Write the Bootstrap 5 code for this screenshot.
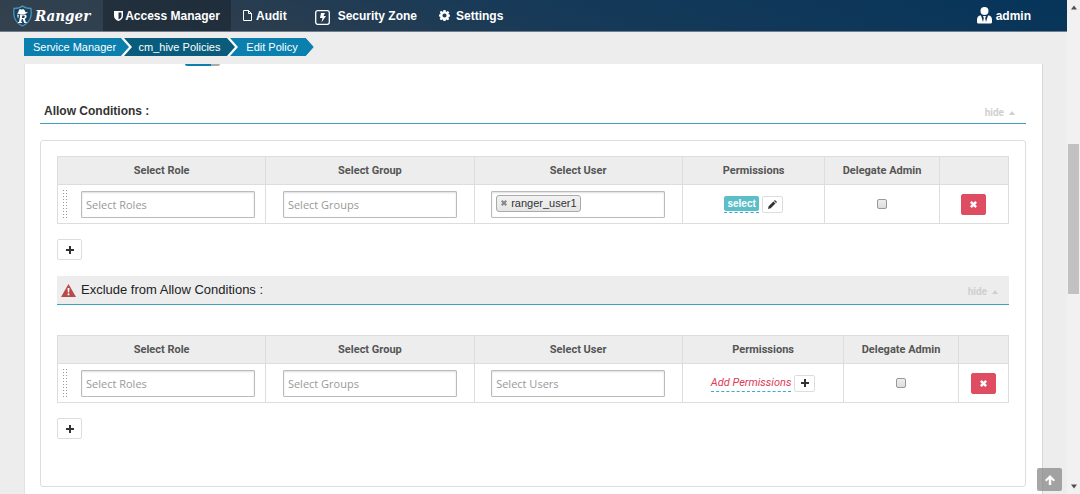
<!DOCTYPE html>
<html lang="en">
<head>
<meta charset="utf-8">
<meta name="viewport" content="width=device-width, initial-scale=1">
<title>Ranger - Edit Policy</title>
<link href="https://cdn.jsdelivr.net/npm/bootstrap@5.3.0/dist/css/bootstrap.min.css" rel="stylesheet">
<style>
  body { font-family: "Liberation Sans", Arial, sans-serif; font-size: 12px; line-height: 16px; background: #ededed; color: #333; }
  a { text-decoration: none; }
  svg { display: block; fill: currentColor; flex: none; }
  .topbar { height: 32px; background: linear-gradient(20deg, #35424e 0%, #2a3d4f 25%, #173a58 50%, #06345a 100%); border-bottom: 1px solid #6d7f8f; font-weight: bold; }
  .topbar a { color: #fff; }
  .brand { width: 103px; padding-left: 12px; gap: 2px; font: italic bold 15px/20px "DejaVu Serif Condensed", "DejaVu Serif", serif; }
  .tab { height: 31px; }
  .tab-current { width: 128px; gap: 2px; background: rgba(20, 28, 38, .45); }
  .tab-audit { margin-left: 12px; }
  .tab-zone { margin-left: 28px; }
  .tab-settings { margin-left: 22px; gap: 6px; }
  .account { padding-right: 36px; }
  .crumbs { padding: 6px 24px 8px; height: 32px; }
  .crumb-trail { background: #fff; border-radius: 2px 0 0 2px; clip-path: polygon(0 0, calc(100% - 8px) 0, 100% 50%, calc(100% - 8px) 100%, 0 100%); }
  .crumb { height: 18px; font: 11px/18px "Liberation Sans", Arial, sans-serif; color: #fff; background: #0b7fad; clip-path: polygon(0 0, calc(100% - 8px) 0, 100% 50%, calc(100% - 8px) 100%, 0 100%, 8px 50%); margin-left: -5px; text-align: center; }
  .crumb-first { width: 105px; margin-left: 0; clip-path: polygon(0 0, calc(100% - 8px) 0, 100% 50%, calc(100% - 8px) 100%, 0 100%); padding-right: 4px; }
  .crumb-mid { width: 111px; background: #0a5c7c; }
  .crumb-last { width: 84px; }
  .sheet { margin: 0 24px; padding: 0 16px 0 15px; background: #fff; border-left: 1px solid #e2e2e2; border-right: 1px solid #d8d8d8; }
  .switch-edge { width: 35px; height: 2px; margin-left: 145px; border-radius: 0 0 12px 12px; background: linear-gradient(90deg, #0b7fad 75%, #aaa 75%); }
  .section-line { border-bottom: 1px solid #3f9fc4; }
  .allow-head { height: 26px; margin-top: 32px; padding: 0 10px 0 4px; }
  .allow-head h2 { font-size: 12px; line-height: 26px; font-weight: bold; }
  .exclude-head { height: 29px; margin: 16px 0 30px; padding: 0 10px 0 4px; background: #ededed; }
  .exclude-head h3 { gap: 5px; font: 13px/26px "Liberation Sans", Arial, sans-serif; color: #222; }
  .hide-link { font: bold 10px/16px Roboto, sans-serif; color: #cfcfcf; gap: 4px; padding-top: 4px; }
  .box { margin-top: 16px; padding: 15px 16px 47px; border: 1px solid #ddd; border-radius: 3px; }
  .conditions { width: 100%; table-layout: fixed; border-collapse: collapse; }
  .conditions th, .conditions td { border: 1px solid #ddd; padding: 0; text-align: center; vertical-align: middle; }
  .conditions th { height: 28px; background: #ededed; font: bold 11px/16px Roboto, sans-serif; color: #555; }
  .conditions td { height: 39px; }
  .w-pick { width: 21.9%; } .w-perm { width: 15%; } .w-perm-wide { width: 17%; } .w-admin { width: 12%; }
  .role-cell { gap: 13px; }
  .grip { width: 6px; height: 31px; background: radial-gradient(circle, #999 1px, transparent 1px) 0 0 / 3px 3px; }
  .picker { width: 174px; height: 27px; border: 1px solid #bbb; border-radius: 1px; box-shadow: inset 0 1px 2px #ddd; padding: 0 4px; background: #fff; font: 11px/16px "Open Sans", sans-serif; color: #555; }
  .picker input { width: 60px; min-width: 0; border: 0; padding: 0; background: transparent; outline: 0; }
  .picker::placeholder { color: #999; opacity: 1; }
  .chip { height: 17px; margin-top: 3px; padding: 0 3px 0 4px; gap: 4px; border: 1px solid #aaa; border-radius: 3px; background: linear-gradient(#f2f2f2, #e5e5e5); font: 11px/14px "Liberation Sans", Arial, sans-serif; color: #333; }
  .chip button { border: 0; padding: 0; background: none; color: #888; }
  .perm-cell { gap: 3px; }
  .perm { height: 17px; border-bottom: 1px dashed #3aa7d5; }
  .perm-tag { padding: 0 3px; border-radius: 2px; background: #5bbec8; color: #fff; font: bold 10px/15px "Liberation Sans", sans-serif; }
  .perm-empty { color: #dc3a58; font: italic 11px/16px Roboto, sans-serif; }
  .tool { display: flex; align-items: center; justify-content: center; width: 25px; height: 21px; padding: 0; border: 1px solid #ddd; border-radius: 2px; background: #fff; color: #333; }
  .tool-add { margin-top: 15px; }
  .tool-small { width: 21px; height: 17px; }
  .tool-delete { background: #de4d62; border-color: #de4d62; color: #fff; }
  .check { appearance: none; display: block; width: 10px; height: 10px; margin: 0 auto; border: 1px solid #999; border-radius: 2px; background: linear-gradient(#eee, #ddd); }
  .to-top { right: 5px; bottom: 3px; width: 25px; height: 23px; border: 0; border-radius: 2px; background: rgba(130, 130, 130, .7); color: #fff; }
  .scroll-rail { flex: none; width: 13px; padding: 5px 0; background: #f1f1f1; color: #505050; }
  .scroll-thumb { flex: none; width: 11px; height: 150px; margin-top: 134px; background: #c1c1c1; }
</style>
<script src="https://cdn.jsdelivr.net/npm/bootstrap@5.3.0/dist/js/bootstrap.bundle.min.js"></script>
</head>
<body>
<svg width="0" height="0" class="position-absolute" aria-hidden="true">
  <symbol id="plus" viewBox="0 0 8 8"><path d="M3 0h2v3h3v2H5v3H3V5H0V3h3z"/></symbol>
  <symbol id="cross" viewBox="0 0 8 8"><path d="M2 0 4 2 6 0 8 2 6 4 8 6 6 8 4 6 2 8 0 6 2 4 0 2z"/></symbol>
  <symbol id="caret" viewBox="0 0 8 4"><path d="M1 4 4 0l3 4z"/></symbol>
</svg>
<div class="d-flex vh-100 overflow-hidden">
  <div class="flex-grow-1 position-relative overflow-hidden">
    <header class="topbar d-flex align-items-center">
      <a href="#" class="brand d-flex align-items-center">
        <svg width="21" height="22" viewBox="0 0 21 22"><path d="M10.500 1C13 3 16 3.500 19 3.500c1 8.500-1 13.500-8.500 17.500C3 17 1 12 2 3.500c3 0 6-.5 8.500-2.500z" fill="#17415f" stroke="#4f93b3" stroke-width="1.300"/><path d="M4.500 8c1.500 0 2-.6 2.300-2.500.3-1.400 1.500-1.600 2.900-.8 1.400-.8 3-.3 3.200 1.300.2 1.200 1.500 1.500 3 1.200-2 2.300-8 2.800-11.400.8z" fill="#fff"/><path fill-rule="evenodd" d="M8 9.500h4.500c2.800 0 2.800 3.600.3 4.300l1 3.200h1l-.3 1h-2.300l-1.500-4h-.9l-.6 3h1l-.2 1H6l.2-1h.8l1.200-6.500H7.800zm2.300 1-.4 2.500h1.600c1.500 0 1.800-2.500.2-2.500z" fill="#fff"/><path d="M5 9.500 7 10l-1 4z" fill="#dce8ee"/></svg>
        Ranger</a>
      <nav class="d-flex align-items-center flex-grow-1" aria-label="Main">
        <a href="#" class="tab tab-current d-flex align-items-center justify-content-center">
          <svg width="9" height="10" viewBox="0 0 9 10"><path fill-rule="evenodd" d="M0 0h9v5c0 2.500-2 4-4.500 5C2 9 0 7.500 0 5zm4.500 1.500v7C6.500 7.500 7.500 6.500 7.500 5V1.500z"/></svg>Access Manager</a>
        <a href="#" class="tab tab-audit d-flex align-items-center gap-1">
          <svg width="9" height="11" viewBox="0 0 9 11"><path fill="none" stroke="#fff" d="M.5.500h5l3 3v7h-8zM5.500.500v3h3"/></svg>Audit</a>
        <a href="#" class="tab tab-zone d-flex align-items-center gap-2">
          <svg width="15" height="15" viewBox="0 0 15 15" class="mt-1"><rect x=".7" y=".7" width="13.600" height="13.600" rx="2" fill="none" stroke="#fff" stroke-width="1.300"/><path d="M6 3h4L8.500 6H11l-4.500 6.500L7.500 8H5z"/></svg>Security Zone</a>
        <a href="#" class="tab tab-settings d-flex align-items-center">
          <svg width="11" height="11" viewBox="0 0 16 16"><path fill-rule="evenodd" d="M6.500 0h3l.4 2 1.300.6L12.900 1.400 15 3.500l-1.200 1.700.6 1.300 1.600.3v2.800l-1.700.4-.6 1.300 1.200 1.700-2 2-1.700-1.200-1.400.6-.4 1.900h-3l-.4-2-1.300-.6L3 14.900.9 12.800l1.200-1.700-.5-1.300L0 9.400V6.600l1.700-.4.6-1.300L1.100 3.200l2-2 1.700 1.200L6.100 2zM8 5a3 3 0 1 0 0 6 3 3 0 0 0 0-6z"/></svg>Settings</a>
      </nav>
      <a href="#" class="account d-flex align-items-center gap-1">
        <svg width="15" height="17" viewBox="0 0 15 17"><circle cx="7.500" cy="4" r="4"/><path fill-rule="evenodd" d="M3 8.500h1L6 15l.8-4L6 9h3l-.8 2 .8 4 2-6.500h1c2 .5 3 2 3 4.500v2c0 1-.7 1.500-2 1.500H2C.7 16.500 0 16 0 15v-2c0-2.500 1-4 3-4.500z"/></svg>
        <span>admin</span></a>
    </header>
    <nav class="crumbs d-flex" aria-label="Breadcrumb">
      <div class="crumb-trail d-flex">
        <a href="#" class="crumb crumb-first">Service Manager</a>
        <a href="#" class="crumb crumb-mid">cm_hive Policies</a>
        <a href="#" class="crumb crumb-last">Edit Policy</a>
      </div>
    </nav>
    <main class="sheet">
      <div class="switch-edge"></div>
      <div class="allow-head section-line d-flex justify-content-between align-items-center">
        <h2 class="m-0">Allow Conditions :</h2>
        <a href="#" class="hide-link d-flex align-items-center">hide <svg width="8" height="4"><use href="#caret"/></svg></a>
      </div>
      <section class="box">
        <table class="conditions">
          <colgroup><col class="w-pick"><col class="w-pick"><col class="w-pick"><col class="w-perm"><col class="w-admin"><col></colgroup>
          <thead><tr><th>Select Role</th><th>Select Group</th><th>Select User</th><th>Permissions</th><th>Delegate Admin</th><th></th></tr></thead>
          <tbody><tr>
            <td><div class="role-cell d-flex align-items-center ps-1"><span class="grip"></span><input class="picker" placeholder="Select Roles" aria-label="Select Roles"></div></td>
            <td><input class="picker" placeholder="Select Groups" aria-label="Select Groups"></td>
            <td><div class="picker d-flex mx-auto"><span class="chip d-flex align-items-center"><button type="button" aria-label="Remove ranger_user1"><svg width="6" height="6"><use href="#cross"/></svg></button>ranger_user1</span><input aria-label="Select Users"></div></td>
            <td><div class="perm-cell d-flex align-items-center justify-content-center"><span class="perm"><span class="perm-tag d-block">select</span></span><button type="button" class="tool tool-small" aria-label="Edit permissions"><svg width="9" height="9" viewBox="0 0 10 10"><path d="M0 10 .700 7 6 1.700 8.300 4 3 9.300zM6.700 1 7.700 0 10 2.300 9 3.300z"/></svg></button></div></td>
            <td><input type="checkbox" class="check" aria-label="Delegate Admin"></td>
            <td><button type="button" class="tool tool-delete mx-auto" aria-label="Delete row"><svg width="7" height="7"><use href="#cross"/></svg></button></td>
          </tr></tbody>
        </table>
        <button type="button" class="tool tool-add" aria-label="Add allow condition"><svg width="8" height="8"><use href="#plus"/></svg></button>
        <div class="exclude-head section-line d-flex justify-content-between align-items-center">
          <h3 class="m-0 d-flex align-items-center"><svg width="15" height="13" viewBox="0 0 15 13"><path fill="#b94a48" d="M7.500 0 15 13H0z"/><path fill="#fff" d="M6.500 4h2l-.4 4.500H6.900zM6.600 9.500h1.800v1.700H6.600z"/></svg>Exclude from Allow Conditions :</h3>
          <a href="#" class="hide-link d-flex align-items-center">hide <svg width="8" height="4"><use href="#caret"/></svg></a>
        </div>
        <table class="conditions">
          <colgroup><col class="w-pick"><col class="w-pick"><col class="w-pick"><col class="w-perm-wide"><col class="w-admin"><col></colgroup>
          <thead><tr><th>Select Role</th><th>Select Group</th><th>Select User</th><th>Permissions</th><th>Delegate Admin</th><th></th></tr></thead>
          <tbody><tr>
            <td><div class="role-cell d-flex align-items-center ps-1"><span class="grip"></span><input class="picker" placeholder="Select Roles" aria-label="Select Roles"></div></td>
            <td><input class="picker" placeholder="Select Groups" aria-label="Select Groups"></td>
            <td><input class="picker" placeholder="Select Users" aria-label="Select Users"></td>
            <td><div class="perm-cell d-flex align-items-center justify-content-center"><a href="#" class="perm perm-empty">Add Permissions</a><button type="button" class="tool tool-small" aria-label="Add permissions"><svg width="8" height="8"><use href="#plus"/></svg></button></div></td>
            <td><input type="checkbox" class="check" aria-label="Delegate Admin"></td>
            <td><button type="button" class="tool tool-delete mx-auto" aria-label="Delete row"><svg width="7" height="7"><use href="#cross"/></svg></button></td>
          </tr></tbody>
        </table>
        <button type="button" class="tool tool-add" aria-label="Add exclude condition"><svg width="8" height="8"><use href="#plus"/></svg></button>
      </section>
      <div class="pb-5"></div>
    </main>
    <button type="button" class="to-top position-absolute d-flex align-items-center justify-content-center p-0" aria-label="Back to top"><svg width="10" height="10" viewBox="0 0 10 10"><path d="M5 0 10 5 8.600 6.400 6.200 4.200V10H3.800V4.200L1.400 6.400 0 5z"/></svg></button>
  </div>
  <div class="scroll-rail d-flex flex-column align-items-center" aria-hidden="true">
    <svg width="6" height="5" viewBox="0 0 6 4"><path d="M0 4 3 0l3 4z"/></svg>
    <div class="scroll-thumb"></div>
    <svg width="6" height="5" viewBox="0 0 6 4" class="mt-auto"><path d="M0 0h6L3 4z"/></svg>
  </div>
</div>
</body>
</html>
